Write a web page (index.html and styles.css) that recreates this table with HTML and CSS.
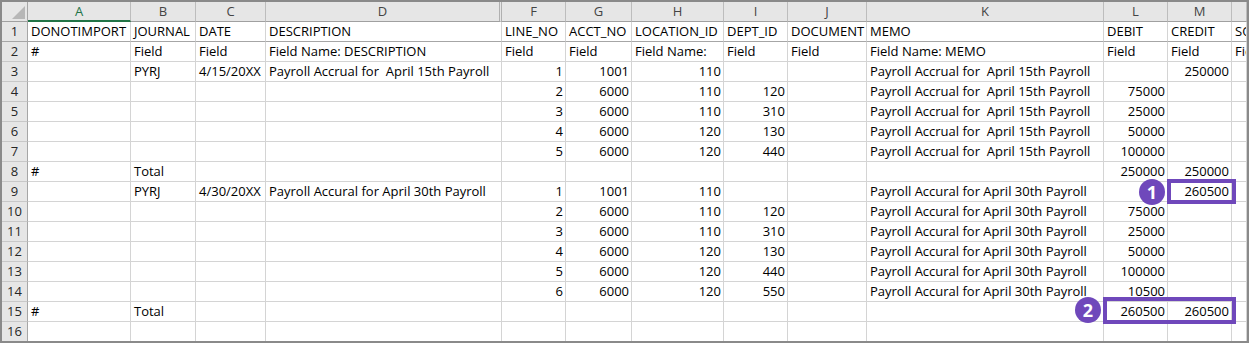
FILE: index.html
```html
<!DOCTYPE html>
<html>
<head>
<meta charset="utf-8">
<link rel="stylesheet" href="styles.css">
</head>
<body>
<div class="sheet">
  <div class="row head">
    <div class="corner"><span class="tri"></span></div>
    <div class="ch sel">A</div><div class="ch">B</div><div class="ch">C</div><div class="ch hidden-after">D</div><div class="ch">F</div><div class="ch">G</div><div class="ch">H</div><div class="ch">I</div><div class="ch">J</div><div class="ch">K</div><div class="ch">L</div><div class="ch">M</div><div class="ch"></div>
  </div>
  <div class="row r1">
    <div class="rh">1</div>
    <div class="c">DONOTIMPORT</div><div class="c">JOURNAL</div><div class="c">DATE</div><div class="c">DESCRIPTION</div><div class="c">LINE_NO</div><div class="c">ACCT_NO</div><div class="c">LOCATION_ID</div><div class="c">DEPT_ID</div><div class="c">DOCUMENT</div><div class="c">MEMO</div><div class="c">DEBIT</div><div class="c">CREDIT</div><div class="c">SOURCE</div>
  </div>
  <div class="row">
    <div class="rh">2</div>
    <div class="c">#</div><div class="c">Field</div><div class="c">Field</div><div class="c">Field Name: DESCRIPTION</div><div class="c">Field</div><div class="c">Field</div><div class="c">Field Name:</div><div class="c">Field</div><div class="c">Field</div><div class="c">Field Name: MEMO</div><div class="c">Field</div><div class="c">Field</div><div class="c">Field</div>
  </div>
  <div class="row">
    <div class="rh">3</div>
    <div class="c"></div><div class="c">PYRJ</div><div class="c">4/15/20XX</div><div class="c">Payroll Accrual for  April 15th Payroll</div><div class="c n">1</div><div class="c n">1001</div><div class="c n">110</div><div class="c n"></div><div class="c"></div><div class="c">Payroll Accrual for  April 15th Payroll</div><div class="c n"></div><div class="c n">250000</div><div class="c"></div>
  </div>
  <div class="row">
    <div class="rh">4</div>
    <div class="c"></div><div class="c"></div><div class="c"></div><div class="c"></div><div class="c n">2</div><div class="c n">6000</div><div class="c n">110</div><div class="c n">120</div><div class="c"></div><div class="c">Payroll Accrual for  April 15th Payroll</div><div class="c n">75000</div><div class="c n"></div><div class="c"></div>
  </div>
  <div class="row">
    <div class="rh">5</div>
    <div class="c"></div><div class="c"></div><div class="c"></div><div class="c"></div><div class="c n">3</div><div class="c n">6000</div><div class="c n">110</div><div class="c n">310</div><div class="c"></div><div class="c">Payroll Accrual for  April 15th Payroll</div><div class="c n">25000</div><div class="c n"></div><div class="c"></div>
  </div>
  <div class="row">
    <div class="rh">6</div>
    <div class="c"></div><div class="c"></div><div class="c"></div><div class="c"></div><div class="c n">4</div><div class="c n">6000</div><div class="c n">120</div><div class="c n">130</div><div class="c"></div><div class="c">Payroll Accrual for  April 15th Payroll</div><div class="c n">50000</div><div class="c n"></div><div class="c"></div>
  </div>
  <div class="row">
    <div class="rh">7</div>
    <div class="c"></div><div class="c"></div><div class="c"></div><div class="c"></div><div class="c n">5</div><div class="c n">6000</div><div class="c n">120</div><div class="c n">440</div><div class="c"></div><div class="c">Payroll Accrual for  April 15th Payroll</div><div class="c n">100000</div><div class="c n"></div><div class="c"></div>
  </div>
  <div class="row">
    <div class="rh">8</div>
    <div class="c">#</div><div class="c">Total</div><div class="c"></div><div class="c"></div><div class="c n"></div><div class="c n"></div><div class="c n"></div><div class="c n"></div><div class="c"></div><div class="c"></div><div class="c n">250000</div><div class="c n">250000</div><div class="c"></div>
  </div>
  <div class="row">
    <div class="rh">9</div>
    <div class="c"></div><div class="c">PYRJ</div><div class="c">4/30/20XX</div><div class="c">Payroll Accural for April 30th Payroll</div><div class="c n">1</div><div class="c n">1001</div><div class="c n">110</div><div class="c n"></div><div class="c"></div><div class="c">Payroll Accural for April 30th Payroll</div><div class="c n"></div><div class="c n">260500</div><div class="c"></div>
  </div>
  <div class="row">
    <div class="rh">10</div>
    <div class="c"></div><div class="c"></div><div class="c"></div><div class="c"></div><div class="c n">2</div><div class="c n">6000</div><div class="c n">110</div><div class="c n">120</div><div class="c"></div><div class="c">Payroll Accural for April 30th Payroll</div><div class="c n">75000</div><div class="c n"></div><div class="c"></div>
  </div>
  <div class="row">
    <div class="rh">11</div>
    <div class="c"></div><div class="c"></div><div class="c"></div><div class="c"></div><div class="c n">3</div><div class="c n">6000</div><div class="c n">110</div><div class="c n">310</div><div class="c"></div><div class="c">Payroll Accural for April 30th Payroll</div><div class="c n">25000</div><div class="c n"></div><div class="c"></div>
  </div>
  <div class="row">
    <div class="rh">12</div>
    <div class="c"></div><div class="c"></div><div class="c"></div><div class="c"></div><div class="c n">4</div><div class="c n">6000</div><div class="c n">120</div><div class="c n">130</div><div class="c"></div><div class="c">Payroll Accural for April 30th Payroll</div><div class="c n">50000</div><div class="c n"></div><div class="c"></div>
  </div>
  <div class="row">
    <div class="rh">13</div>
    <div class="c"></div><div class="c"></div><div class="c"></div><div class="c"></div><div class="c n">5</div><div class="c n">6000</div><div class="c n">120</div><div class="c n">440</div><div class="c"></div><div class="c">Payroll Accural for April 30th Payroll</div><div class="c n">100000</div><div class="c n"></div><div class="c"></div>
  </div>
  <div class="row">
    <div class="rh">14</div>
    <div class="c"></div><div class="c"></div><div class="c"></div><div class="c"></div><div class="c n">6</div><div class="c n">6000</div><div class="c n">120</div><div class="c n">550</div><div class="c"></div><div class="c">Payroll Accural for April 30th Payroll</div><div class="c n">10500</div><div class="c n"></div><div class="c"></div>
  </div>
  <div class="row">
    <div class="rh">15</div>
    <div class="c">#</div><div class="c">Total</div><div class="c"></div><div class="c"></div><div class="c n"></div><div class="c n"></div><div class="c n"></div><div class="c n"></div><div class="c"></div><div class="c"></div><div class="c n">260500</div><div class="c n">260500</div><div class="c"></div>
  </div>
  <div class="row">
    <div class="rh">16</div>
    <div class="c"></div><div class="c"></div><div class="c"></div><div class="c"></div><div class="c"></div><div class="c"></div><div class="c"></div><div class="c"></div><div class="c"></div><div class="c"></div><div class="c"></div><div class="c"></div><div class="c"></div>
  </div>

  <div class="hl hl-1"></div>
  <div class="hl hl-2"></div>
  <div class="badge badge-1">1</div>
  <div class="badge badge-2">2</div>
</div>
</body>
</html>
```
FILE: styles.css
```css
html, body {
  margin: 0;
  padding: 0;
  background: #ffffff;
}

.sheet {
  position: relative;
  width: 1249px;
  height: 343px;
  box-sizing: border-box;
  border: 2px solid #8a8a8a;
  overflow: hidden;
  font-family: "Open Sans", "Liberation Sans", Arial, sans-serif;
  font-size: 13px;
  color: #000;
}

.row {
  display: grid;
  grid-template-columns: 26px 103px 65px 70px 236px 64px 66px 92px 64px 79px 237px 64px 64px 1fr;
  height: 20px;
}

.c, .rh, .ch, .corner {
  box-sizing: border-box;
  height: 20px;
  border-right: 1px solid #d4d4d4;
  border-bottom: 1px solid #d4d4d4;
  line-height: 19px;
  white-space: pre;
  overflow: hidden;
}

.c {
  padding: 0 2px 0 3px;
}

.c.n {
  text-align: right;
}

.rh {
  background: #e6e6e6;
  color: #262626;
  text-align: center;
  border-right-color: #a6a6a6;
  border-bottom-color: #c8c8c8;
}

.head .ch {
  background: #e6e6e6;
  color: #444;
  text-align: center;
  border-right-color: #bdbdbd;
  border-bottom-color: #a0a0a0;
}

.head .ch.sel {
  color: #217346;
  border-bottom: 2px solid #217346;
  line-height: 18px;
}

.head .ch.hidden-after {
  border-right: 3px double #b0b0b0;
}

.corner {
  position: relative;
  background: #e6e6e6;
  border-right-color: #a6a6a6;
  border-bottom-color: #a0a0a0;
}

.tri {
  position: absolute;
  right: 2px;
  bottom: 2px;
  width: 0;
  height: 0;
  border-left: 13px solid transparent;
  border-bottom: 13px solid #b7b7b7;
}

.r1 .c {
  border-bottom-color: #a6a6a6;
}

.r1 .rh {
  border-bottom-color: #a6a6a6;
}

.hl {
  position: absolute;
  box-sizing: border-box;
  border: 4px solid #6f48bb;
}

.hl-1 {
  left: 1165px;
  top: 177px;
  width: 69px;
  height: 25px;
}

.hl-2 {
  left: 1101px;
  top: 295px;
  width: 133px;
  height: 27px;
}

.badge {
  position: absolute;
  width: 26px;
  height: 26px;
  border-radius: 50%;
  background: #6f48bb;
  color: #fff;
  font-family: "Open Sans", "Liberation Sans", Arial, sans-serif;
  font-weight: bold;
  font-size: 18px;
  line-height: 26px;
  text-align: center;
}

.badge-1 {
  left: 1137px;
  top: 177px;
}

.badge-2 {
  left: 1073px;
  top: 295px;
}
```
